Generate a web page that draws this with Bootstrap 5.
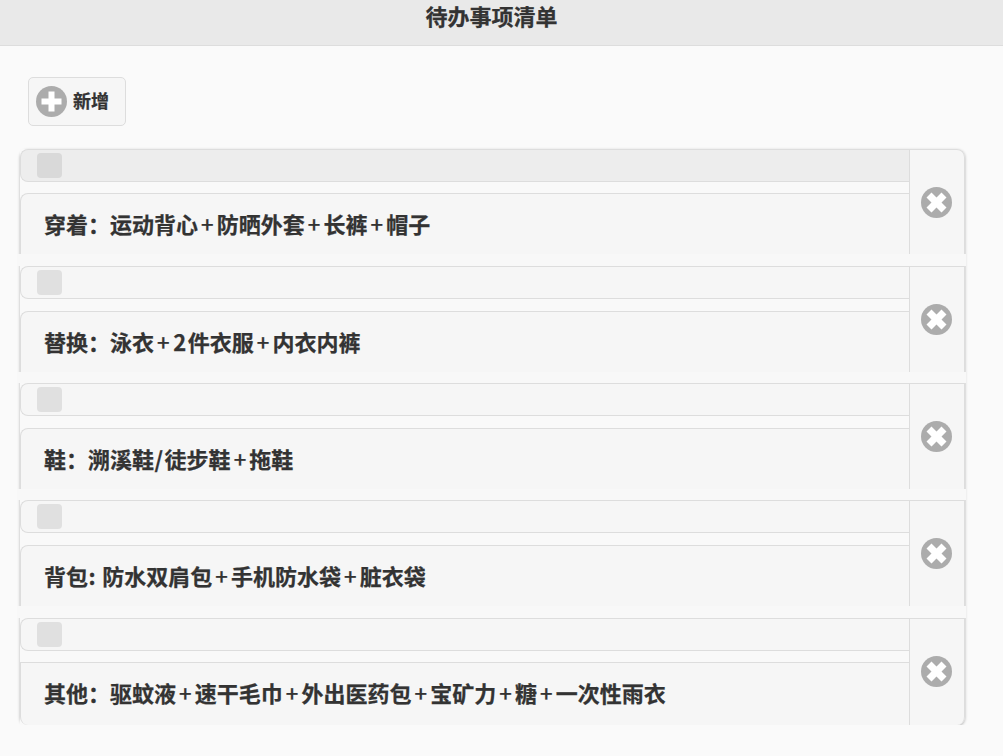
<!DOCTYPE html>
<html lang="zh-CN">
<head>
    <meta charset="UTF-8">
    <meta name="viewport" content="width=device-width, initial-scale=1.0">
    <title>待办事项清单</title>
    <link href="https://cdn.jsdelivr.net/npm/bootstrap@5.3.3/dist/css/bootstrap.min.css" rel="stylesheet">
    <script src="https://cdn.jsdelivr.net/npm/bootstrap@5.3.3/dist/js/bootstrap.bundle.min.js"></script>
    <style>
        body {
            background: #fafafa;
            color: #333;
            font-family: "Noto Sans CJK SC", "Open Sans", sans-serif;
            font-weight: 700;
            overflow: hidden;
            -webkit-text-stroke: .25px #333;
        }
        .page-head {
            height: 46px;
            padding-right: 20px;
            background: #e9e9e9;
            border-bottom: 1px solid #ddd;
            font-size: 22px;
            line-height: 30px;
        }
        .page-body { padding: 31px 38px 0 20px; }
        .add-btn {
            width: 98px;
            height: 49px;
            margin-left: 8px;
            margin-bottom: 23px;
            padding: 0 0 2px 7px;
            background: #f6f6f6;
            border: 1px solid #ddd;
            border-radius: 5px;
            font-size: 18px;
            font-weight: 700;
            color: #333;
            column-gap: 6px;
        }
        .round-icon { width: 31px; height: 31px; flex: none; }
        .add-btn .round-icon { margin-top: 2px; }
        .todo-list {
            border-radius: 8px;
            box-shadow: 0 1px 3px rgba(0, 0, 0, .3);
        }
        .todo-gap {
            position: relative;
            margin: 0 -1px 0 -3px;
            background: #f8f8f8;
        }
        .todo-main { min-width: 0; background: #f9f9f9; }
        .todo-head {
            flex: none;
            height: 33px;
            padding-left: 16px;
            background: #f6f6f6;
            border: 1px solid #ddd;
            border-right: 0;
            border-radius: 8px 0 0 8px;
        }
        .todo-row:first-child .todo-head { background: #ededed; }
        .todo-row:first-child .drag-box { background: #d9d9d9; }
        .drag-box {
            display: block;
            width: 25px;
            height: 25px;
            margin-top: 3px;
            background: #e0e0e0;
            border-radius: 4px;
        }
        .todo-text {
            flex: 1;
            padding-left: 23px;
            background: #f6f6f6;
            border-top: 1px solid #ddd;
            border-left: 1px solid #ddd;
            border-top-left-radius: 8px;
            font-size: 22px;
            line-height: 59px;
            white-space: nowrap;
        }
        .todo-row:last-child .todo-text {
            border-top-left-radius: 0;
            border-bottom-left-radius: 8px;
        }
        .plus-sign { padding: 0 3.1px; font-weight: 500; }
        .wide-sign { padding: 0 1.5px 0 .5px; }
        .todo-del {
            width: 56px;
            flex: none;
            padding: 0 2px 0 0;
            background: #f6f6f6;
            border: 0;
            border-left: 1px solid #ddd;
            border-right: 1px solid #ddd;
            border-top: 1px solid #ddd;
        }
        .todo-row:first-child .todo-del { border-top-right-radius: 8px; }
        .todo-row:last-child .todo-del { padding-bottom: 2px; border-bottom-right-radius: 8px; }
    </style>
</head>
<body>

<svg width="0" height="0" class="d-block">
    <symbol id="iconPlus" viewBox="0 0 31 31">
        <circle cx="15.500" cy="15.500" r="15.500" fill="#acacac"/>
        <path d="M12.500 5.500h6v7h7v6h-7v7h-6v-7h-7v-6h7z" fill="#fff"/>
    </symbol>
    <symbol id="iconClose" viewBox="0 0 31 31">
        <circle cx="15.500" cy="15.500" r="15.500" fill="#acacac"/>
        <path d="M10.500 5.500l5 5 5-5 5 5-5 5 5 5-5 5-5-5-5 5-5-5 5-5-5-5z" fill="#fff"/>
    </symbol>
</svg>

<header class="page-head text-center">待办事项清单</header>

<main class="page-body">
    <button type="button" class="add-btn d-flex align-items-center">
        <svg class="round-icon"><use href="#iconPlus"/></svg>
        新增
    </button>

    <div class="todo-list" id="todoList"></div>
</main>

<script>
    // each row: text, row height, head-to-text gap, gap below the row
    const items = [
        { text: "穿着：运动背心+防晒外套+长裤+帽子", height: 105, inner: 11, gap: 12 },
        { text: "替换：泳衣+2件衣服+内衣内裤", height: 106, inner: 12, gap: 11 },
        { text: "鞋：溯溪鞋/徒步鞋+拖鞋", height: 106, inner: 12, gap: 11 },
        { text: "背包: 防水双肩包+手机防水袋+脏衣袋", height: 106, inner: 12, gap: 12 },
        { text: "其他：驱蚊液+速干毛巾+外出医药包+宝矿力+糖+一次性雨衣", height: 107, inner: 11, gap: 0 }
    ];

    const list = document.getElementById("todoList");
    items.forEach(item => {
        const row = document.createElement("div");
        row.className = "todo-row d-flex";
        row.style.height = item.height + "px";
        const label = item.text
            .replace(/[2\/:]/g, '<span class="wide-sign">$&</span>')
            .replace(/\+/g, '<span class="plus-sign">+</span>');
        row.innerHTML = `
            <div class="todo-main flex-grow-1 d-flex flex-column">
                <div class="todo-head"><span class="drag-box"></span></div>
                <div class="todo-text" style="margin-top: ${item.inner}px">${label}</div>
            </div>
            <button type="button" class="todo-del d-flex align-items-center justify-content-center">
                <svg class="round-icon"><use href="#iconClose"/></svg>
            </button>
        `;
        list.appendChild(row);
        if (item.gap) {
            const gap = document.createElement("div");
            gap.className = "todo-gap";
            gap.style.height = item.gap + "px";
            list.appendChild(gap);
        }
    });
</script>

</body>
</html>
